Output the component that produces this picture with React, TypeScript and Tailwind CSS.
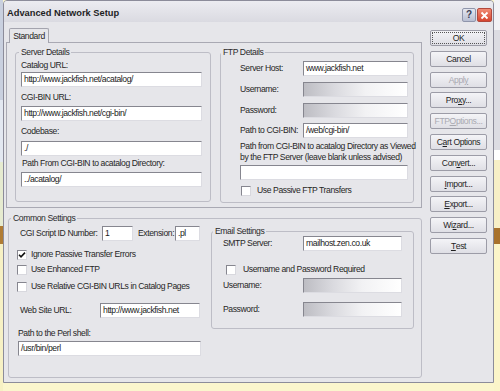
import { ReactNode } from "react";

type FieldProps = {
  value?: string;
  className?: string;
  blurred?: boolean;
};

function Field({ value = "", className = "", blurred = false }: FieldProps) {
  return (
    <div
      className={`h-[15px] shrink-0 border border-t-[#86868f] border-l-[#86868f] border-r-[#dcdce2] border-b-[#dcdce2] pl-[2px] leading-[13px] text-[#1b1b1b] whitespace-nowrap overflow-hidden ${
        blurred
          ? "bg-[linear-gradient(90deg,#bdbdc3_0%,#dadadf_30%,#f2f2f4_60%,#ffffff_100%)]"
          : "bg-white"
      } ${className}`}
    >
      {value}
    </div>
  );
}

function Check({ checked = false }: { checked?: boolean }) {
  return (
    <span className="w-[10px] h-[10px] shrink-0 bg-white border border-t-[#86868f] border-l-[#86868f] border-r-[#d8d8de] border-b-[#d8d8de] flex items-center justify-center">
      {checked && (
        <svg width="8" height="8" viewBox="0 0 8 8">
          <path d="M1 3.8 L3 5.8 L7 1.6" stroke="#111" strokeWidth="1.6" fill="none" />
        </svg>
      )}
    </span>
  );
}

function CheckRow({ label, checked, gap, className = "" }: { label: string; checked?: boolean; gap: string; className?: string }) {
  return (
    <div className={`h-[11px] flex items-center ${gap} ${className}`}>
      <Check checked={checked} />
      <span className="leading-[11px] whitespace-nowrap">{label}</span>
    </div>
  );
}

function Label({ children, className = "" }: { children: ReactNode; className?: string }) {
  return <span className={`leading-[11px] whitespace-nowrap shrink-0 ${className}`}>{children}</span>;
}

function Group({ title, legendGap, className = "", children }: { title: string; legendGap: string; className?: string; children: ReactNode }) {
  return (
    <fieldset className={`border border-[#bdbdc6] rounded-[3px] p-0 m-0 min-w-0 ${className}`}>
      <legend className={`${legendGap} px-[2px] leading-[9px] text-[#2a2a2a]`}>{title}</legend>
      {children}
    </fieldset>
  );
}

function Btn({ children, disabled = false, focused = false }: { children: ReactNode; disabled?: boolean; focused?: boolean }) {
  return (
    <div
      className={`h-[16px] w-[57px] rounded-[2px] border border-[#9c9ca7] bg-gradient-to-b from-[#f4f4f7] to-[#dfdfe5] flex items-stretch ${
        disabled ? "text-[#a9a9b1]" : "text-[#1f1f1f]"
      }`}
    >
      <span
        className={`flex-1 flex items-center justify-center leading-[10px] whitespace-nowrap ${
          focused ? "m-[1px] border border-dotted border-[#555]" : ""
        }`}
      >
        {children}
      </span>
    </div>
  );
}

function U({ children }: { children: ReactNode }) {
  return <span className="underline underline-offset-[1px]">{children}</span>;
}

export default function App() {
  return (
    <div className="w-[500px] h-[391px] flex bg-[#fbf6cd] font-['Liberation_Sans',Arial,sans-serif] text-[8.6px] tracking-[-0.4px] text-[#262626] overflow-hidden">
      {/* desktop strip, left */}
      <div className="w-[3px] h-full flex flex-col shrink-0">
        <div className="h-[100px] bg-[#c9d0df]" />
        <div className="h-[62px] bg-[#e3e8f1]" />
        <div className="h-[64px] bg-[#e6ebd0]" />
        <div className="h-[18px] bg-[#b07c34]" />
        <div className="flex-1 bg-[#f7f1c4]" />
      </div>

      {/* dialog window */}
      <div className="w-[491px] h-[383px] shrink-0 border border-[#8c8c9a] rounded-t-[4px] bg-[#e6e6ea] flex flex-col">
        {/* title bar */}
        <div className="h-[21px] shrink-0 flex items-start justify-between pl-[3px] pr-[1px] rounded-t-[3px] bg-gradient-to-b from-[#ececf1] to-[#dadae1]">
          <span className="mt-[7px] leading-[11px] text-[9.3px] tracking-normal font-bold text-[#1e1e24]">Advanced Network Setup</span>
          <div className="mt-[7px] flex gap-[1px]">
            <div className="w-[14px] h-[14px] rounded-[2px] border border-[#8f95ab] bg-gradient-to-b from-[#e4e7f0] to-[#b9bfd2] flex items-center justify-center text-[10px] tracking-normal font-bold leading-none text-[#3b4056]">
              ?
            </div>
            <div className="w-[15px] h-[14px] rounded-[2px] border border-[#b2483c] bg-gradient-to-b from-[#f08a74] to-[#d6442f] flex items-center justify-center">
              <svg width="9" height="9" viewBox="0 0 9 9">
                <path d="M1.5 1.5 L7.5 7.5 M7.5 1.5 L1.5 7.5" stroke="#fff" strokeWidth="1.8" />
              </svg>
            </div>
          </div>
        </div>

        {/* body */}
        <div className="flex pl-[2px]">
          {/* left column */}
          <div className="w-[416px] shrink-0 pt-[6px] flex flex-col">
            {/* tab header */}
            <div className="flex h-[14px]">
              <div className="relative z-10 ml-[3px] w-[40px] h-[15px] border border-b-0 border-[#a4a4ae] rounded-t-[2px] bg-[#e6e6ea] flex items-center justify-center leading-[11px]">
                Standard
              </div>
            </div>

            {/* tab panel */}
            <div className="h-[166px] border border-[#a9a9b3] flex gap-[9px] pt-[5px] pl-[8px]">
              <Group title="Server Details" legendGap="ml-[3px]" className="w-[196px] h-[154px]">
                <div className="flex flex-col pl-[5px] pr-[8px]">
                  <Label className="mt-[3px]">Catalog URL:</Label>
                  <Field className="mt-[1px]" value="http://www.jackfish.net/acatalog/" />
                  <Label className="mt-[5px]">CGI-BIN URL:</Label>
                  <Field className="mt-[3px]" value="http://www.jackfish.net/cgi-bin/" />
                  <Label className="mt-[5px]">Codebase:</Label>
                  <Field className="mt-[4px]" value="./" />
                  <Label className="mt-[2px] ml-[1px]">Path From CGI-BIN to acatalog Directory:</Label>
                  <Field className="mt-[3px]" value="../acatalog/" />
                </div>
              </Group>

              <Group title="FTP Details" legendGap="ml-0" className="w-[194px] h-[155px]">
                <div className="flex flex-col pl-[19px] pr-[5px]">
                  <div className="mt-[4px] flex items-center">
                    <Label className="w-[63px]">Server Host:</Label>
                    <Field className="w-[105px]" value="www.jackfish.net" />
                  </div>
                  <div className="mt-[6px] flex items-center">
                    <Label className="w-[63px]">Username:</Label>
                    <Field className="w-[105px]" blurred />
                  </div>
                  <div className="mt-[6px] flex items-center">
                    <Label className="w-[63px]">Password:</Label>
                    <Field className="w-[105px]" blurred />
                  </div>
                  <div className="mt-[5px] flex items-center">
                    <Label className="w-[63px]">Path to CGI-BIN:</Label>
                    <Field className="w-[105px]" value="/web/cgi-bin/" />
                  </div>
                  <p className="mt-[3px] leading-[11px] whitespace-nowrap">
                    Path from CGI-BIN to acatalog Directory as Viewed
                    <br />
                    by the FTP Server (leave blank unless advised)
                  </p>
                  <Field className="mt-[2px]" />
                  <CheckRow className="mt-[5px] ml-[1px]" gap="gap-[6px]" label="Use Passive FTP Transfers" />
                </div>
              </Group>
            </div>

            {/* common settings */}
            <Group title="Common Settings" legendGap="ml-[2px]" className="mt-[6px] ml-[2px] w-[414px] h-[164px]">
              <div className="flex">
                <div className="w-[192px] shrink-0 pl-[8px] flex flex-col">
                  <div className="mt-[3px] flex items-center">
                    <Label className="ml-[3px] w-[82px]">CGI Script ID Number:</Label>
                    <Field className="w-[31px]" value="1" />
                    <Label className="ml-[5px] w-[37px]">Extension:</Label>
                    <Field className="w-[25px]" value=".pl" />
                  </div>
                  <CheckRow className="mt-[8px]" gap="gap-[4px]" checked label="Ignore Passive Transfer Errors" />
                  <CheckRow className="mt-[4px]" gap="gap-[4px]" label="Use Enhanced FTP" />
                  <CheckRow className="mt-[6px]" gap="gap-[4px]" label="Use Relative CGI-BIN URLs in Catalog Pages" />
                  <div className="mt-[11px] flex items-center">
                    <Label className="ml-[3px] w-[80px]">Web Site URL:</Label>
                    <Field className="w-[100px]" value="http://www.jackfish.net" />
                  </div>
                  <Label className="mt-[10px] ml-[1px]">Path to the Perl shell:</Label>
                  <Field className="mt-[2px] ml-[1px] w-[183px]" value="/usr/bin/perl" />
                </div>

                <Group title="Email Settings" legendGap="ml-[1px]" className="mt-[4px] ml-[10px] w-[203px] h-[102px]">
                  <div className="flex flex-col pl-[11px] pr-[10px]">
                    <div className="flex items-center">
                      <Label className="w-[80px]">SMTP Server:</Label>
                      <Field className="w-[99px]" value="mailhost.zen.co.uk" />
                    </div>
                    <CheckRow className="mt-[13px] ml-[3px]" gap="gap-[7px]" label="Username and Password Required" />
                    <div className="mt-[3px] flex items-center">
                      <Label className="w-[80px]">Username:</Label>
                      <Field className="w-[99px]" blurred />
                    </div>
                    <div className="mt-[9px] flex items-center">
                      <Label className="w-[80px]">Password:</Label>
                      <Field className="w-[99px]" blurred />
                    </div>
                  </div>
                </Group>
              </div>
            </Group>
          </div>

          {/* button column */}
          <div className="ml-[8px] mt-[8px] flex flex-col gap-[4.8px]">
            <Btn focused>OK</Btn>
            <Btn>Cancel</Btn>
            <Btn disabled>
              Appl<U>y</U>
            </Btn>
            <Btn>
              Pro<U>x</U>y...
            </Btn>
            <Btn disabled>
              FTP <U>O</U>ptions...
            </Btn>
            <Btn>
              C<U>a</U>rt Options
            </Btn>
            <Btn>
              Con<U>v</U>ert...
            </Btn>
            <Btn>
              <U>I</U>mport...
            </Btn>
            <Btn>
              <U>E</U>xport...
            </Btn>
            <Btn>
              Wi<U>z</U>ard...
            </Btn>
            <Btn>
              <U>T</U>est
            </Btn>
          </div>
        </div>
      </div>

      {/* desktop strip, right */}
      <div className="w-[6px] h-full flex flex-col shrink-0">
        <div className="h-[30px] bg-[#f2f2f5]" />
        <div className="h-[120px] bg-[#dcdce2]" />
        <div className="h-[10px] bg-[#ffffff]" />
        <div className="h-[68px] bg-[#f7efc6]" />
        <div className="h-[16px] bg-[#a8722c]" />
        <div className="flex-1 bg-[#fbf5c9]" />
      </div>
    </div>
  );
}
